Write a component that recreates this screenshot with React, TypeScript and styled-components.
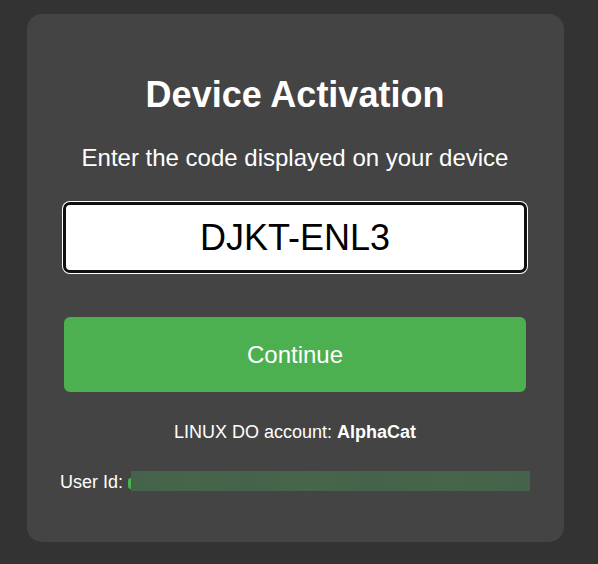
import React from "react";
import styled, { createGlobalStyle } from "styled-components";

const Global = createGlobalStyle`
  html, body {
    margin: 0;
    padding: 0;
    background: #333333;
  }
  body {
    font-family: "Liberation Sans", Arial, sans-serif;
  }
  * { box-sizing: border-box; }
`;

const Page = styled.div`
  min-height: 564px;
  display: flex;
  justify-content: center;
  align-items: flex-start;
  padding: 14px 34px 22px 27px;
`;

const Card = styled.div`
  width: 537px;
  height: 528px;
  background: #444444;
  border-radius: 15px;
  padding: 60px 38px 0 37px;
  display: flex;
  flex-direction: column;
  align-items: stretch;
  color: #ffffff;
`;

const Title = styled.h1`
  margin: 0;
  font-size: 36px;
  line-height: 42px;
  font-weight: 700;
  text-align: center;
`;

const Subtitle = styled.p`
  margin: 28px 0 0;
  font-size: 24px;
  line-height: 28px;
  text-align: center;
`;

const CodeInput = styled.input`
  margin-top: 31px;
  height: 69px;
  width: 100%;
  background: #ffffff;
  color: #000000;
  border: 2px solid #101010;
  border-radius: 6px;
  box-shadow: 0 0 0 1px #101010, 0 0 0 2px #ffffff;
  font-family: "Liberation Sans", Arial, sans-serif;
  font-size: 36px;
  text-align: center;
  outline: none;
  padding: 0;
`;

const ContinueButton = styled.button`
  margin-top: 45px;
  height: 75px;
  width: 100%;
  background: #4caf50;
  color: #ffffff;
  border: none;
  border-radius: 6px;
  font-family: "Liberation Sans", Arial, sans-serif;
  font-size: 24px;
  cursor: pointer;
`;

const Account = styled.p`
  margin: 29px 0 0;
  font-size: 18px;
  line-height: 22px;
  text-align: center;
  b { font-weight: 700; }
`;

const UserRow = styled.div`
  margin: 28px -4px 0 -4px;
  height: 21px;
  display: flex;
  align-items: center;
  font-size: 18px;
  line-height: 22px;
`;

const UserLabel = styled.span`
  margin-right: 5px;
`;

const Redacted = styled.span`
  display: flex;
  align-items: center;
  flex: 1;
  height: 20px;
  margin-top: -1px;
`;

const Dot = styled.span`
  width: 3px;
  height: 11px;
  margin-top: 4px;
  background: #4caf50;
  border-radius: 3px 0 0 3px;
`;

const Bar = styled.span`
  flex: 1;
  height: 20px;
  background: linear-gradient(
    90deg,
    #44634a 0%,
    #46654a 15%,
    #44634a 30%,
    #47664b 45%,
    #44634a 60%,
    #46654a 80%,
    #44634a 100%
  );
`;

export default function App() {
  return (
    <>
      <Global />
      <Page>
        <Card>
          <Title>Device Activation</Title>
          <Subtitle>Enter the code displayed on your device</Subtitle>
          <CodeInput value="DJKT-ENL3" readOnly />
          <ContinueButton>Continue</ContinueButton>
          <Account>
            LINUX DO account: <b>AlphaCat</b>
          </Account>
          <UserRow>
            <UserLabel>User Id:</UserLabel>
            <Redacted>
              <Dot />
              <Bar />
            </Redacted>
          </UserRow>
        </Card>
      </Page>
    </>
  );
}
